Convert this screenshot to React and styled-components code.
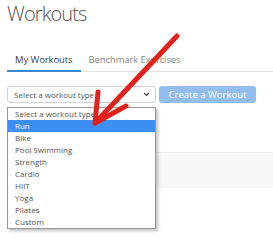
import React from "react";
import styled, { createGlobalStyle } from "styled-components";

const Global = createGlobalStyle`
  html, body { margin: 0; padding: 0; background: #fff; }
  body { font-family: "Open Sans", "Liberation Sans", sans-serif; width: 273px; height: 240px; overflow: hidden; }
`;

const Page = styled.div`
  position: relative;
  width: 273px;
  height: 240px;
`;

const Inner = styled.div`
  padding: 0 0 0 7px;
`;

const Title = styled.h1`
  margin: 0;
  font-weight: 300;
  font-size: 20px;
  line-height: 28px;
  color: #555;
  letter-spacing: -0.9px;
`;

const Tabs = styled.div`
  display: flex;
  margin-top: 22px;
  border-bottom: 1px solid #e3e3e3;
`;

const Tab = styled.div`
  padding: 0 8px;
  height: 22px;
  line-height: 20px;
  font-size: 9.5px;
  letter-spacing: -0.1px;
  color: ${(p) => (p.$active ? "#444" : "#888")};
  border-bottom: 2px solid ${(p) => (p.$active ? "#3a87d8" : "transparent")};
  margin-bottom: -1px;
  box-sizing: border-box;
`;

const Controls = styled.div`
  display: flex;
  align-items: flex-start;
  gap: 3px;
  margin-top: 14px;
`;

const SelectWrap = styled.div`
  position: relative;
`;

const SelectBox = styled.div`
  box-sizing: border-box;
  width: 149px;
  height: 17px;
  border: 1px solid #cfcfcf;
  border-radius: 3px;
  display: flex;
  align-items: center;
  justify-content: space-between;
  padding: 0 5px 0 6px;
  font-size: 8px;
  color: #555;
`;

const Button = styled.div`
  box-sizing: border-box;
  width: 97px;
  height: 17px;
  border-radius: 3px;
  background: #92bdec;
  color: #fff;
  font-size: 9.5px;
  line-height: 17px;
  text-align: center;
`;

const List = styled.div`
  position: absolute;
  top: 21px;
  left: 0;
  width: 149px;
  box-sizing: border-box;
  border: 1px solid #9a9a9a;
  background: #fff;
  box-shadow: 2px 2px 3px rgba(0, 0, 0, 0.25);
  z-index: 2;
`;

const Option = styled.div`
  height: 12px;
  line-height: 12px;
  padding-left: 7px;
  font-size: 8px;
  color: ${(p) => (p.$selected ? "#fff" : "#555")};
  background: ${(p) => (p.$selected ? "#3d8ef2" : "transparent")};
`;

const Band = styled.div`
  margin-top: 49px;
  height: 35px;
  border-top: 1px solid #ececec;
  background: #f8f8f8;
`;

const Arrow = styled.svg`
  position: absolute;
  left: 0;
  top: 0;
  z-index: 5;
  pointer-events: none;
`;

const options = [
  "Select a workout type",
  "Run",
  "Bike",
  "Pool Swimming",
  "Strength",
  "Cardio",
  "HIIT",
  "Yoga",
  "Pilates",
  "Custom",
];

export default function App() {
  return (
    <Page>
      <Global />
      <Inner>
        <Title>Workouts</Title>
        <Tabs>
          <Tab $active>My Workouts</Tab>
          <Tab>Benchmark Exercises</Tab>
        </Tabs>
        <Controls>
          <SelectWrap>
            <SelectBox>
              <span>Select a workout type</span>
              <svg width="7" height="5" viewBox="0 0 7 5">
                <path d="M1 1 L3.5 3.5 L6 1" fill="none" stroke="#444" strokeWidth="1.2" />
              </svg>
            </SelectBox>
            <List>
              {options.map((o) => (
                <Option key={o} $selected={o === "Run"}>
                  {o}
                </Option>
              ))}
            </List>
          </SelectWrap>
          <Button>Create a Workout</Button>
        </Controls>
        <Band />
      </Inner>
      <Arrow width="273" height="240" viewBox="0 0 273 240">
        <g stroke="#e3201b" strokeWidth="5" strokeLinecap="round" strokeLinejoin="round" fill="none">
          <path d="M177 36 L95 123" />
          <path d="M98 92 L95 123 L126 106" />
        </g>
      </Arrow>
    </Page>
  );
}
